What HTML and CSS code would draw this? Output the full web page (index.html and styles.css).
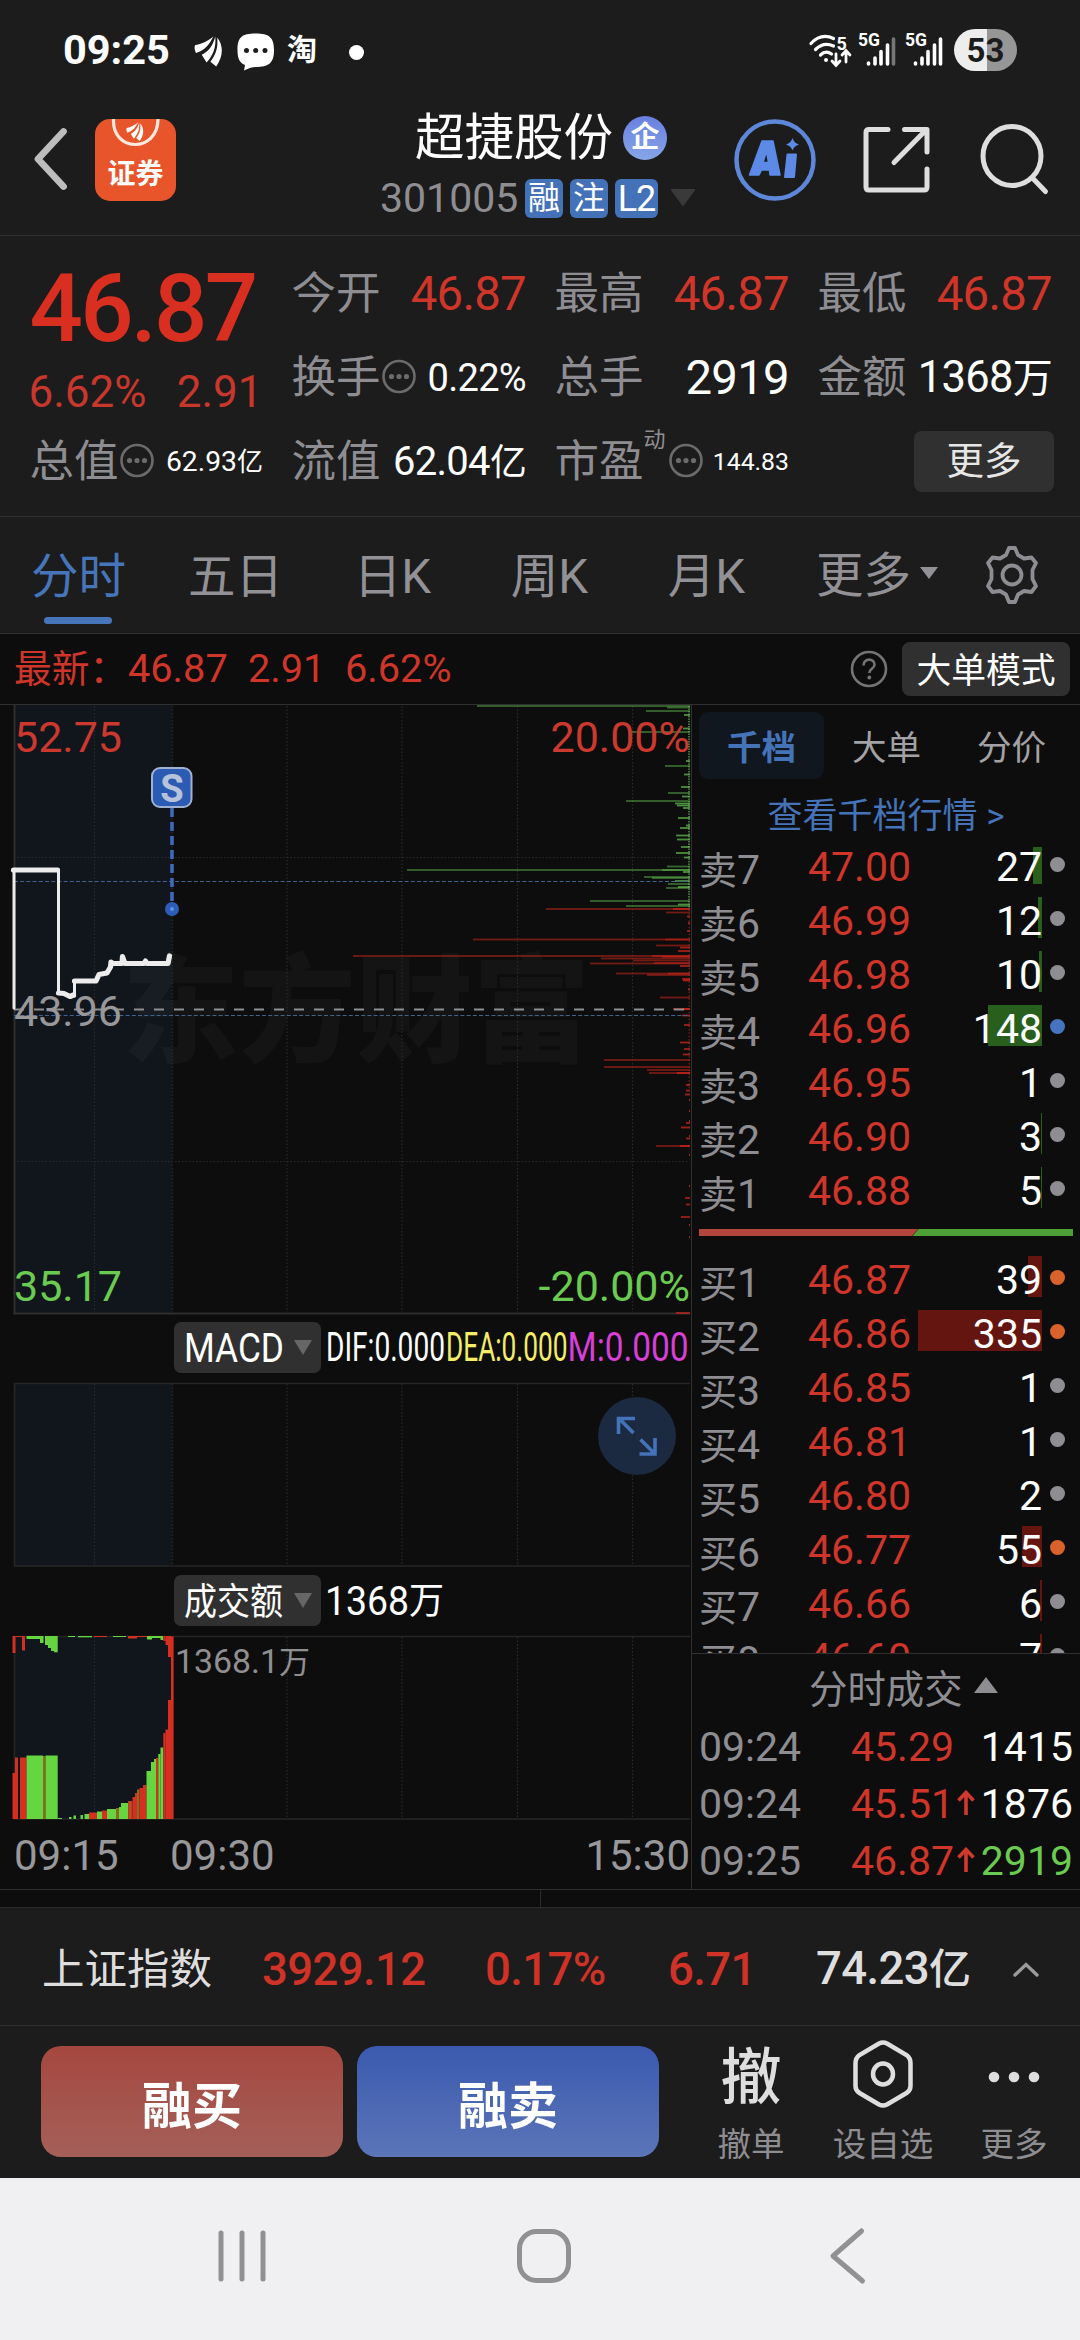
FILE: index.html
```html
<!DOCTYPE html>
<html lang="zh-CN">
<head>
<meta charset="utf-8">
<title>超捷股份 301005</title>
<link rel="stylesheet" href="styles.css">
</head>
<body>
<svg width="0" height="0" class="defs">
  <defs>
    <symbol id="wing" viewBox="0 0 30 32">
      <path d="M1 10C8 9 14 6 20 1C16 9 12 15 2 18C1 15 0 13 1 10Z"/>
      <path d="M22 1C20 9 16 16 8 20L13 28C20 20 23 12 22 1Z"/>
      <path d="M24 2C31 11 30 22 23 32L17 27C23 19 25 12 24 2Z"/>
    </symbol>
    <symbol id="dots" viewBox="0 0 34 34">
      <circle cx="17" cy="17" r="15.5" fill="none" stroke="#6b6b6b" stroke-width="2.6"/>
      <circle cx="9.5" cy="17" r="2.6" fill="#6b6b6b"/><circle cx="17" cy="17" r="2.6" fill="#6b6b6b"/><circle cx="24.5" cy="17" r="2.6" fill="#6b6b6b"/>
    </symbol>
    <symbol id="up" viewBox="0 0 18 26">
      <path d="M9 25V3M1.5 10.5L9 2.5L16.5 10.5" fill="none" stroke="#d2392e" stroke-width="3.6"/>
    </symbol>
  </defs>
</svg>

<div class="screen">
  <header class="top">
    <div class="status">
      <span class="clock">09:25</span>
      <svg class="st-wing" width="30" height="34" fill="#fff"><use href="#wing"/></svg>
      <svg class="st-bubble" width="38" height="38" viewBox="0 0 38 38">
        <path d="M18.500 .5C32 .5 37 4 37 17C37 30 32 34 18.500 34C15.500 34 12 35 7 37.500L8 32C2 29.500 .5 25 .5 17C.5 4 5 .5 18.500 .5Z" fill="#fff"/>
        <circle cx="9.500" cy="17.500" r="2.500" fill="#1c1c1c"/><circle cx="18.700" cy="17.500" r="2.500" fill="#1c1c1c"/><circle cx="28" cy="17.500" r="2.500" fill="#1c1c1c"/>
      </svg>
      <span class="st-tao">淘</span>
      <i class="st-dot"></i>
      <svg class="st-wifi" width="44" height="36" viewBox="0 0 44 36" fill="none" stroke="#fff" stroke-width="3.200" stroke-linecap="round">
        <path d="M2 10.500C9 3 17 2 24.500 5.500M6.500 16.500C12 11 18 10 24.500 13M11.500 22C15 18.500 19 18.500 22.500 21"/>
        <circle cx="17" cy="27" r="2" fill="#fff" stroke="none"/>
        <path d="M27 21V32M23 28L27 32.500L31 28M37 29V18M33 22L37 17.500L41 22" stroke-width="2.800"/>
        <text x="27.500" y="16.500" class="st-5">5</text>
      </svg>
      <svg class="st-sig" width="38" height="36" viewBox="0 0 38 36">
        <text x="0" y="14" textLength="22" lengthAdjust="spacingAndGlyphs" class="st-5g">5G</text>
        <g stroke="#fff" stroke-width="3.600" stroke-linecap="round"><path d="M10.500 32V31M17 32V26M23 32V19.500M29.500 32V13"/><path d="M35.500 32V7" stroke="#777"/></g>
      </svg>
      <svg class="st-sig" width="38" height="36" viewBox="0 0 38 36">
        <text x="0" y="14" textLength="22" lengthAdjust="spacingAndGlyphs" class="st-5g">5G</text>
        <g stroke="#fff" stroke-width="3.600" stroke-linecap="round"><path d="M10.500 32V31M17 32V26M23 32V19.500M29.500 32V13M35.500 32V7"/></g>
      </svg>
      <span class="battery">53</span>
    </div>
    <div class="titlebar">
      <svg class="back" width="34" height="62" viewBox="0 0 34 62"><path d="M30.500 3.500L5 31L30.500 58.500" fill="none" stroke="#bdbdbd" stroke-width="6.800" stroke-linecap="round" stroke-linejoin="round"/></svg>
      <div class="app">
        <svg width="81" height="30" viewBox="0 0 81 30"><path d="M18.500 0C17 34 63 34 63 0" fill="none" stroke="#ffe9df" stroke-width="3.200"/><use href="#wing" x="31" y="3" width="18" height="19" fill="#fff"/></svg>
        <span>证券</span>
      </div>
      <div class="name">
        <div class="name-row"><span class="stock">超捷股份</span><span class="qi">企</span></div>
        <div class="code-row"><span class="code">301005</span><b class="chip">融</b><b class="chip">注</b><b class="chip l2">L2</b>
          <svg width="26" height="18" viewBox="0 0 26 18"><path d="M2 1H24L13 16Z" fill="#3a3a3a" stroke="#3a3a3a" stroke-width="2" stroke-linejoin="round"/></svg></div>
      </div>
      <svg class="ai" width="82" height="84" viewBox="0 0 82 84">
        <circle cx="41" cy="42" r="38.500" fill="none" stroke="#5d87d8" stroke-width="4.500"/>
        <path d="M28 23H39L46 57H36L35.500 52H27.500L25 57H15.500ZM32.500 33L29 44.500H34.500Z" fill="#5c8ae6" fill-rule="evenodd" stroke="#5c8ae6" stroke-width="1.500" stroke-linejoin="round"/>
        <path d="M53.500 36.500H62L60 59H51Z" fill="#5c8ae6" stroke="#5c8ae6" stroke-width="2" stroke-linejoin="round"/>
        <path d="M58.500 20Q60 25 65 26.500Q60 28 58.500 32.500Q57 28 52 26.500Q57 25 58.500 20Z" fill="#5c8ae6"/>
      </svg>
      <svg class="share" width="68" height="68" viewBox="0 0 68 68" fill="none" stroke="#dedede" stroke-width="5" stroke-linecap="round" stroke-linejoin="round"><path d="M25 3.500H6Q3 3.500 3 6.500V61Q3 64 6 64H61Q64 64 64 61V43M41.500 3.500H64V26M31 36.500L62 5"/></svg>
      <svg class="search" width="70" height="72" viewBox="0 0 70 72" fill="none" stroke="#dedede" stroke-width="5" stroke-linecap="round"><ellipse cx="33" cy="33" rx="29" ry="29.500"/><path d="M53.500 55L66.500 68.500"/></svg>
    </div>
  </header>

  <section class="quote">
    <div class="q-price">
      <div class="big">46.87</div>
      <div class="chg"><span>6.62%</span><span>2.91</span></div>
    </div>
    <div class="cell"><span class="lb">今开</span><span class="v red">46.87</span></div>
    <div class="cell"><span class="lb">最高</span><span class="v red">46.87</span></div>
    <div class="cell"><span class="lb">最低</span><span class="v red">46.87</span></div>
    <div class="cell"><span class="lb">换手</span><svg class="tip" width="34" height="35"><use href="#dots"/></svg><span class="v s37">0.22%</span></div>
    <div class="cell"><span class="lb">总手</span><span class="v">2919</span></div>
    <div class="cell"><span class="lb">金额</span><span class="v s43">1368<i>万</i></span></div>
    <div class="cell first"><span class="lb">总值</span><svg class="tip" width="34" height="35"><use href="#dots"/></svg><span class="v s28">62.93<i>亿</i></span></div>
    <div class="cell"><span class="lb">流值</span><span class="v s40">62.04<i>亿</i></span></div>
    <div class="cell"><span class="lb">市盈</span><sup>动</sup><svg class="tip" width="34" height="35"><use href="#dots"/></svg><span class="v s24">144.83</span></div>
    <div class="cell"><button class="more">更多</button></div>
  </section>

  <nav class="periods">
    <span class="on">分时</span><span>五日</span><span>日K</span><span>周K</span><span>月K</span>
    <span class="pm">更多<svg width="18" height="14" viewBox="0 0 18 14"><path d="M0 1H18L9 13Z" fill="#929196"/></svg></span>
    <svg class="gear" width="60" height="60" viewBox="0 0 60 60" fill="none" stroke="#8e8d92" stroke-width="3.800" stroke-linejoin="round"><path d="M24 10L27 3H33L36 10L42 13.500L49.500 12.500L54 18L50.500 25V34L54 41L49.500 47L42 46L36 49.500L33 57H27L24 49.500L18 46L10.500 47L6 41L9.500 34V25L6 18L10.500 12.500L18 13.500Z"/><circle cx="30" cy="30" r="9.500"/></svg>
  </nav>

  <div class="latest">
    <span class="lt-label">最新：</span><span class="lt-a">46.87</span><span class="lt-b">2.91</span><span class="lt-c">6.62%</span>
    <svg class="help" width="38" height="38" viewBox="0 0 38 38"><circle cx="19" cy="19" r="17" fill="none" stroke="#747474" stroke-width="2.600"/><path d="M13.500 15.500C13.500 7.500 25 8 24.500 15C24.300 18.500 19.300 18.500 19.300 23" fill="none" stroke="#747474" stroke-width="2.600"/><circle cx="19.300" cy="27.500" r="1.900" fill="#747474"/></svg>
    <button class="mode">大单模式</button>
  </div>

  <main class="board">
    <section class="charts">
      <svg class="trend" width="691" height="610" viewBox="0 705 691 610">
        <rect x="14" y="705" width="158" height="608" fill="#11161d"/>
        <text x="122" y="1053" class="mark" textLength="468" lengthAdjust="spacingAndGlyphs">东方财富</text>
        <path class="grid" d="M94.500 706V1312M172.500 706V1312M287 706V1312M402 706V1312M517.500 706V1312M632.500 706V1312M14 857.500H690M14 1161.500H690"/>
        <path d="M14.500 705V1313.500H690" fill="none" stroke="#2e2e2e" stroke-width="2"/>
        <g id="depth"></g>
        <path class="blue-dash" d="M14 881.500H690M14 1015.500H690"/>
        <path d="M14 1009.600H688" stroke="#8f8f8f" stroke-width="2" stroke-dasharray="10 10"/>
        <g fill="none" stroke="#ececec" stroke-linejoin="round" stroke-linecap="round">
          <path d="M14 1008V870M58.500 870V993M74.500 996V981" stroke-width="3"/>
          <path d="M13.500 870H57.500M58.500 993L64 993.500L70 996.500L73.500 995M74.500 981H96L99 974.500L107 973L110.500 967L111 962L113 963.500H122L122.500 956.500L125 963.500H144L145.500 961L147 963.500H168L169.500 956" stroke-width="5.200"/>
        </g>
        <path d="M172 808V902" stroke="#3f69bb" stroke-width="3.600" stroke-dasharray="9 5"/>
        <circle cx="172" cy="909" r="7" fill="#2d5db6"/><circle cx="172" cy="909" r="2" fill="#5f93f0"/>
        <rect x="152" y="768" width="39.500" height="39" rx="8" fill="#2c5bb3" stroke="#9fb0d0" stroke-width="2"/>
        <text x="172" y="802" class="s-mark" text-anchor="middle">S</text>
        <g class="ax">
          <text x="14" y="752" class="r">52.75</text><text x="690" y="752" class="r" text-anchor="end">20.00%</text>
          <text x="14" y="1025.500">43.96</text>
          <text x="14" y="1300.500" class="g">35.17</text><text x="690" y="1300.500" class="g" text-anchor="end">-20.00%</text>
        </g>
      </svg>
      <div class="ind">
        <button><svg width="100" height="50"><text x="0" y="39" textLength="100" lengthAdjust="spacingAndGlyphs">MACD</text></svg><svg width="18" height="15" viewBox="0 0 18 15"><path d="M0 0H18L9 15Z" fill="#666"/></svg></button>
        <svg class="vals" width="368" height="51"><text x="4" y="39" textLength="119" lengthAdjust="spacingAndGlyphs">DIF:0.000</text><text x="124" y="39" textLength="121.500" lengthAdjust="spacingAndGlyphs" class="dea">DEA:0.000</text><text x="245.500" y="39" textLength="121" lengthAdjust="spacingAndGlyphs" class="m">M:0.000</text></svg>
      </div>
      <div class="plot">
        <svg width="691" height="185" viewBox="0 1383 691 185">
          <rect x="14" y="1383" width="158" height="183" fill="#11161d"/>
          <path class="grid" d="M94.500 1384V1566M172.500 1384V1566M287 1384V1566M402 1384V1566M517.500 1384V1566M632.500 1384V1566"/>
          <path d="M690 1383.500H14.500V1566H690" fill="none" stroke="#262626" stroke-width="1.600"/>
        </svg>
        <svg class="expand" width="78" height="78" viewBox="0 0 78 78"><circle cx="39" cy="39" r="39" fill="#1b2a40"/><path d="M35.500 36L22 22.500M20.500 37V21.500H37M42.500 42.500L56 56M41.500 57H57V41" fill="none" stroke="#4473b8" stroke-width="3.600"/></svg>
      </div>
      <div class="ind">
        <button><svg width="100" height="50"><text x="0" y="38.500" class="cj" textLength="99" lengthAdjust="spacingAndGlyphs">成交额</text></svg><svg width="18" height="15" viewBox="0 0 18 15"><path d="M0 0H18L9 15Z" fill="#666"/></svg></button>
        <svg class="vals" width="368" height="51"><text x="3" y="39.500" textLength="84" lengthAdjust="spacingAndGlyphs">1368</text><text x="87" y="39" class="cj" textLength="35" lengthAdjust="spacingAndGlyphs">万</text></svg>
      </div>
      <svg class="volume" width="691" height="185" viewBox="0 1636 691 185">
        <rect x="14" y="1636" width="158" height="183" fill="#11161d"/>
        <path class="grid" d="M94.500 1637V1819M287 1637V1819M402 1637V1819M517.500 1637V1819M632.500 1637V1819"/>
        <path d="M690 1636.500H14.500V1819H690" fill="none" stroke="#262626" stroke-width="1.600"/>
        <g id="vol"></g>
        <text x="175" y="1672.500" class="vmax" textLength="104" lengthAdjust="spacingAndGlyphs">1368.1</text><text x="279" y="1672.500" class="vmax w">万</text>
      </svg>
      <div class="times"><span>09:15</span><span>09:30</span><span>15:30</span></div>
    </section>

    <aside class="book">
      <div class="btabs"><b>千档</b><span>大单</span><span>分价</span></div>
      <div class="link">查看千档行情 <i>&gt;</i></div>
      <div class="sell">
        <div class="lv"><span class="n"><i>卖</i>7</span><span class="p">47.00</span><span class="q"><u style="width:9px"></u>27</span><em></em></div>
        <div class="lv"><span class="n"><i>卖</i>6</span><span class="p">46.99</span><span class="q"><u style="width:4px"></u>12</span><em></em></div>
        <div class="lv"><span class="n"><i>卖</i>5</span><span class="p">46.98</span><span class="q"><u style="width:3px"></u>10</span><em></em></div>
        <div class="lv"><span class="n"><i>卖</i>4</span><span class="p">46.96</span><span class="q"><u style="width:54px"></u>148</span><em class="bl"></em></div>
        <div class="lv"><span class="n"><i>卖</i>3</span><span class="p">46.95</span><span class="q">1</span><em></em></div>
        <div class="lv"><span class="n"><i>卖</i>2</span><span class="p">46.90</span><span class="q"><u style="width:1px"></u>3</span><em></em></div>
        <div class="lv"><span class="n"><i>卖</i>1</span><span class="p">46.88</span><span class="q"><u style="width:1px"></u>5</span><em></em></div>
      </div>
      <svg class="ratio" width="374" height="7" viewBox="0 0 374 7"><path d="M0 0H219L213 7H0Z" fill="#b4453c"/><path d="M219.500 0H374V7H213.500Z" fill="#4f9f37"/></svg>
      <div class="buy">
        <div class="lv"><span class="n"><i>买</i>1</span><span class="p">46.87</span><span class="q"><u style="width:14px"></u>39</span><em class="or"></em></div>
        <div class="lv"><span class="n"><i>买</i>2</span><span class="p">46.86</span><span class="q"><u style="width:124px"></u>335</span><em class="or"></em></div>
        <div class="lv"><span class="n"><i>买</i>3</span><span class="p">46.85</span><span class="q">1</span><em></em></div>
        <div class="lv"><span class="n"><i>买</i>4</span><span class="p">46.81</span><span class="q">1</span><em></em></div>
        <div class="lv"><span class="n"><i>买</i>5</span><span class="p">46.80</span><span class="q">2</span><em></em></div>
        <div class="lv"><span class="n"><i>买</i>6</span><span class="p">46.77</span><span class="q"><u style="width:20px"></u>55</span><em class="or"></em></div>
        <div class="lv"><span class="n"><i>买</i>7</span><span class="p">46.66</span><span class="q"><u style="width:2px"></u>6</span><em></em></div>
        <div class="lv"><span class="n"><i>买</i>8</span><span class="p">46.60</span><span class="q"><u style="width:2px"></u>7</span><em></em></div>
      </div>
      <div class="deals-head">分时成交<svg width="24" height="16" viewBox="0 0 24 16"><path d="M12 0L24 16H0Z" fill="#8e8d92"/></svg></div>
      <div class="deals">
        <div><span class="t">09:24</span><span class="dp">45.29</span><svg width="18" height="26"></svg><span class="dq">1415</span></div>
        <div><span class="t">09:24</span><span class="dp">45.51</span><svg width="18" height="26"><use href="#up"/></svg><span class="dq">1876</span></div>
        <div><span class="t">09:25</span><span class="dp">46.87</span><svg width="18" height="26"><use href="#up"/></svg><span class="dq gr">2919</span></div>
      </div>
    </aside>
  </main>

  <div class="strip"><span></span><span></span></div>

  <section class="index">
    <span class="ix-name">上证指数</span><b class="ix-a">3929.12</b><b class="ix-b">0.17%</b><b class="ix-c">6.71</b><b class="ix-d">74.23<i>亿</i></b>
    <svg width="26" height="15" viewBox="0 0 26 15"><path d="M2 13L13 2.500L24 13" fill="none" stroke="#9a9a9a" stroke-width="3.400" stroke-linecap="round"/></svg>
  </section>

  <footer class="actions">
    <button class="act red-b">融买</button><button class="act blue-b">融卖</button>
    <div class="tool t1"><span class="che">撤</span><small>撤单</small></div>
    <div class="tool t2"><svg width="62" height="68" viewBox="0 0 62 68" fill="none" stroke="#dedede" stroke-width="4.500"><path d="M27 3.500Q31 1.500 35 3.500L54.500 15Q58.500 18 58.500 23V46Q58.500 50.500 54.500 53L35 64.500Q31 66.500 27 64.500L7.500 53Q3.500 50.500 3.500 46V23Q3.500 18 7.500 15Z"/><ellipse cx="31" cy="34" rx="10" ry="10.500"/></svg><small>设自选</small></div>
    <div class="tool t3"><svg width="62" height="68" viewBox="0 0 62 68" fill="#dedede"><circle cx="11" cy="37" r="5.300"/><circle cx="31" cy="37" r="5.300"/><circle cx="51" cy="37" r="5.300"/></svg><small>更多</small></div>
  </footer>

  <div class="sysnav">
    <svg width="50" height="56" viewBox="0 0 50 56" stroke="#919191" stroke-width="5" stroke-linecap="round"><path d="M4 5V51M25 5V51M46 5V51"/></svg>
    <svg width="56" height="56" viewBox="0 0 56 56" fill="none" stroke="#919191" stroke-width="5"><rect x="3.500" y="3.500" width="49" height="49" rx="17"/></svg>
    <svg width="36" height="56" viewBox="0 0 36 56" fill="none" stroke="#919191" stroke-width="5" stroke-linecap="round" stroke-linejoin="round"><path d="M32.500 3L4 28L33.500 53"/></svg>
  </div>
</div>
<script src="charts.js"></script>
</body>
</html>
```
FILE: styles.css
```css
* { box-sizing: border-box; margin: 0; padding: 0; }
i, em, u { font-style: normal; text-decoration: none; }
body { background: #0d0d0d; font-family: Roboto, "Noto Sans CJK SC", sans-serif; color: #fff; }
button { border: 0; font: inherit; color: inherit; display: flex; align-items: center; justify-content: center; }
svg { display: block; flex: none; overflow: visible; }
.defs { position: absolute; }
.screen { width: 1080px; height: 2340px; overflow: hidden; display: flex; flex-direction: column; }
.screen > * { flex: none; }
.red { color: #cf3529; }

.top { height: 236px; background: #1c1c1c; border-bottom: 1px solid #303030; }
.status { height: 100px; display: flex; align-items: center; padding-left: 63px; }
.clock { width: 131px; font: 700 41.500px/50px Roboto, sans-serif; }
.st-wing { width: 29px; margin-right: 14px; margin-top: 2px; }
.st-bubble { margin-right: 12px; margin-top: 4px; }
.st-tao { width: 32px; font-weight: 700; font-size: 30px; line-height: 40px; }
.st-dot { width: 15px; height: 15px; border-radius: 50%; background: #fff; margin: 4px 0 0 30px; }
.st-wifi { margin-left: 445px; margin-top: 2px; }
.st-5 { font: 700 18px Roboto, sans-serif; fill: #fff; stroke: none; }
.st-5g { font: 700 19px Roboto, sans-serif; fill: #fff; }
.st-sig { margin-left: 5px; margin-right: 4px; }
.battery { width: 63px; height: 42px; margin-left: 7px; border-radius: 21px; background: linear-gradient(90deg, #ededed 33px, #969696 33px); color: #1c1c1c; font: 700 33px/43px Roboto, sans-serif; text-align: center; }
.titlebar { height: 135px; display: flex; }
.back { margin: 28px 0 0 33px; }
.app { width: 81px; height: 82px; margin: 19px 0 0 28px; background: #e9552b; border-radius: 15px; display: flex; flex-direction: column; align-items: center; overflow: hidden; }
.app span { font-family: "Noto Sans CJK SC", sans-serif; font-weight: 700; font-size: 28px; line-height: 46px; }
.name { width: 321px; margin-left: 204px; padding-top: 8px; }
.name-row { display: flex; align-items: center; padding-left: 35px; height: 60px; }
.stock { font-size: 49.500px; line-height: 60px; width: 208px; }
.qi { width: 44px; height: 44px; border-radius: 50%; background: linear-gradient(#6a7fe1, #86a6e6); font-weight: 700; font-size: 29px; line-height: 42px; text-align: center; }
.code-row { display: flex; align-items: center; height: 60px; gap: 7px; }
.code { font-size: 41px; line-height: 60px; color: #8e8d92; width: 138px; }
.chip { width: 38px; height: 39px; border-radius: 6px; background: #4472b8; font-weight: 400; font-size: 32px; line-height: 39px; text-align: center; }
.chip.l2 { width: 43px; font-size: 36px; line-height: 40px; letter-spacing: -1px; }
.code-row svg { margin-left: 5px; }
.ai { margin: 18px 0 0 33px; }
.share { margin: 26px 0 0 47px; }
.search { margin: 23px 0 0 48px; }

.quote { height: 281px; background: #1c1c1c; border-bottom: 1px solid #303030; display: grid; grid-template-columns: 233px 234px 234px 234px; grid-template-rows: 84px 84px 84px; column-gap: 29px; padding: 16px 0 0 29.500px; }
.q-price { grid-row: span 2; }
.big { font-weight: 500; font-size: 94px; letter-spacing: -2.800px; line-height: 90px; color: #d92f21; margin-top: 12px; }
.chg { display: flex; justify-content: space-between; font-size: 44px; line-height: 52px; color: #c8372c; margin-top: 12px; margin-left: -1px; }
.cell { display: flex; align-items: center; line-height: 60px; padding-bottom: 0; }
.lb { font-size: 44.500px; color: #8e8d92; white-space: nowrap; }
.tip { margin: -4px 0 0 1px; }
.v { margin-left: auto; font-size: 47.300px; white-space: nowrap; letter-spacing: -.7px; margin-right: -.5px; }
.v i { font-size: .92em; }
.s43 { font-size: 43.500px; } .s40 { font-size: 40px; } .s37 { font-size: 38px; } .s28 { font-size: 28.300px; letter-spacing: 0; } .s24 { font-size: 24.800px; letter-spacing: 0; }
.cell sup { font-size: 22px; line-height: 22px; color: #8e8d92; align-self: flex-start; margin-top: 9px; width: 24px; }
.cell sup + .tip { margin-left: 1px; }
.more { width: 140px; height: 61px; background: #303030; border-radius: 8px; margin-left: auto; margin-right: -2.500px; margin-top: -2px; font-size: 37.500px; color: #e6e6e6; }

.periods { height: 117px; background: #1c1c1c; border-bottom: 1px solid #303030; display: flex; font-size: 47.500px; line-height: 116px; color: #929196; }
.periods span { width: 157px; text-align: center; margin-top: 2px; height: 114px; }
.periods .on { color: #4675ba; position: relative; }
.periods .on::after { content: ""; position: absolute; left: 44px; top: 98px; width: 68px; height: 7px; border-radius: 4px; background: #4675ba; }
.periods .pm { width: 170px; display: flex; align-items: center; padding-left: 31px; }
.pm svg { margin-left: 9px; margin-top: -6px; }
.gear { margin: 28px 0 0 27px; }

.latest { height: 71px; border-bottom: 1px solid #303030; display: flex; align-items: center; padding-left: 14px; font-size: 39.700px; line-height: 70px; color: #cf3529; white-space: nowrap; }
.lt-label { font-size: 37.800px; width: 114px; }
.lt-a { width: 120px; } .lt-b { width: 97px; } .lt-c { width: 110px; }
.help { margin-left: 395px; }
.mode { width: 168px; height: 54px; border-radius: 8px; background: #303030; color: #fff; font-size: 34.800px; line-height: 54px; margin-left: 14px; padding-top: 4px; }

.board { height: 1185px; display: flex; border-bottom: 1px solid #303030; }
.charts { width: 691px; }
.grid { stroke: #2a2a2a; stroke-width: 1.200; stroke-dasharray: 1.500 2; fill: none; }
.blue-dash { stroke: #41648f; stroke-width: 1.200; stroke-dasharray: 4 2.200; fill: none; }
.mark { font: 900 117px "Noto Sans CJK SC", sans-serif; fill: #fff; fill-opacity: .032; }
.s-mark { font: 700 38px Roboto, sans-serif; fill: #b7c3da; }
.ax text { font-size: 43px; fill: #98989b; }
.ax .r { fill: #cb392e; } .ax .g { fill: #6bcb51; }
.ind { height: 68px; display: flex; padding: 7px 0 0 174px; }
.ind button { width: 147px; height: 51px; border-radius: 7px; background: #303030; justify-content: flex-start; padding-left: 10px; gap: 10px; }
.ind text { font-size: 40px; fill: #fff; }
.ind .cj { font-size: 37px; }
.ind .dea { fill: #f5ec68; } .ind .m { fill: #d83fd8; }
.vals { margin-left: 1px; }
.plot { position: relative; }
.expand { position: absolute; left: 598px; top: 14px; }
.vmax { font-size: 33px; fill: #8f8f91; }
.vmax.w { font-size: 31px; }
.times { display: flex; font-size: 42px; line-height: 68px; color: #98989b; padding: 1px 1px 0 14px; }
.times span:nth-child(1) { width: 156px; }
.times span:nth-child(3) { margin-left: auto; }

.book { flex: 1; border-left: 1.500px solid #303030; height: 1184px; display: flex; flex-direction: column; }
.book > * { flex: none; }
.btabs { display: flex; margin: 7px 0 0 7px; font-size: 34.500px; line-height: 73px; text-align: center; color: #a2a2a4; }
.btabs > * { width: 125px; height: 67px; }
.btabs b { color: #4473b8; background: #10171f; border-radius: 9px; }
.link { height: 68px; padding-left: 75.500px; font-size: 35px; line-height: 76px; color: #4473b8; white-space: pre; }
.sell { height: 378px; overflow: hidden; padding-top: 0; }
.lv { height: 54px; display: flex; font-size: 41px; line-height: 48px; }
.sell .lv:first-child { margin-top: -4px; }
.n { width: 110px; padding-left: 7px; color: #8e8d92; padding-top: 3px; }
.n i { font-size: 38px; }
.p { width: 101px; padding-left: 6px; color: #cf3529; }
.q { width: 139px; height: 41px; text-align: right; position: relative; z-index: 0; }
.q u { position: absolute; right: 0; top: 0; height: 41px; background: #295f1c; z-index: -1; }
.buy .q u { background: #641510; }
.lv em { width: 15px; height: 15px; border-radius: 50%; background: #8e8d92; margin: 13.500px 0 0 7.500px; }
.lv em.bl { background: #4573bd; } .lv em.or { background: #d9622b; }
.ratio { margin: 4px 0 0 7px; }
.buy { height: 418px; overflow: hidden; border-bottom: 1px solid #303030; padding-top: 20px; }
.deals-head { height: 65px; display: flex; align-items: center; padding: 0 0 2px 117px; font-size: 38.400px; color: #8e8d92; }
.deals-head svg { margin: -2px 0 0 11px; }
.deals div { height: 57px; display: flex; align-items: center; font-size: 41px; line-height: 57px; }
.t { width: 150px; padding-left: 7px; color: #8e8d92; }
.dp { width: 109px; padding-left: 9px; color: #cf3529; }
.deals svg { margin: -3px 0 0 6px; }
.dq { margin-left: auto; padding-right: 7px; }
.gr { color: #6bcb51; }

.strip { height: 18px; display: flex; border-bottom: 1px solid #2a2a2a; }
.strip span { width: 540px; }
.strip span + span { border-left: 1px solid #2a2a2a; }

.index { height: 118px; background: #1c1c1c; border-bottom: 1px solid #2e2e2e; display: flex; align-items: center; padding: 6px 0 0 42px; font-size: 45.500px; line-height: 60px; }
.index b { font-weight: 500; letter-spacing: -.6px; color: #cf3226; }
.ix-name { width: 220px; font-size: 42.500px; color: #dedede; }
.ix-a { width: 223px; } .ix-b { width: 183px; } .ix-c { width: 148px; }
.index .ix-d { width: 197px; color: #dedede; }
.ix-d i { font-size: 42px; }

.actions { height: 152px; background: #1c1c1c; display: flex; padding: 20px 0 0 41px; }
.act { width: 302px; height: 111px; border-radius: 20px; font-weight: 700; font-size: 50px; padding-top: 1px; margin-right: 14px; }
.red-b { background: linear-gradient(#a5473f, #a46059); }
.blue-b { background: linear-gradient(#3b5aaf, #5b75b8); }
.tool { display: flex; flex-direction: column; align-items: center; width: 130px; margin-top: -6px; color: #dedede; }
.tool small { font-size: 33.500px; line-height: 40px; margin-top: 17px; color: #8e8d92; white-space: nowrap; }
.che { font-weight: 500; font-size: 61px; line-height: 76px; height: 68px; }
.t1 { margin-left: 13px; } .t2 { margin-left: 2px; } .t3 { margin-left: 1px; }

.sysnav { height: 162px; background: #f0f0f2; display: flex; padding: 50px 0 0 217px; }
.sysnav svg:nth-child(2) { margin-left: 249px; }
.sysnav svg:nth-child(3) { margin-left: 257px; }
```
FILE: charts.js
```javascript
const NS = "http://www.w3.org/2000/svg";
function add(parent, name, attrs) {
  const el = document.createElementNS(NS, name);
  for (const k in attrs) el.setAttribute(k, attrs[k]);
  parent.appendChild(el);
}

// Order depth: [y, length leftwards from the right edge]
const asks = [[706,213],[707.5,23],[711,44],[715,6],[732,58],[728.5,7],[761,4],[766,25],[774.500,6],[787,9],[793,22],[796.500,8],[801,64],[803.500,15],[805.500,13],[808,7],[818,12],[825.500,4],[828,10],[835.500,14],[839.500,13],[847,9],[853,14],[857.500,6],[866.500,23],[870,283],[870,28],[872,7],[877,46],[878,38],[881,15],[884,22],[887,12],[888,24],[901,100],[904.500,12],[906,64]];
const bids = [[909,144],[909,17],[912.500,24],[916.500,3],[923,2],[931,3],[939.500,217],[939.500,25],[945.500,34],[947.500,10],[951,12],[956,337],[956,38],[957,28],[958.500,89],[960.500,57],[963.500,100],[963,36],[966,10],[973.500,74],[973.500,22],[975,43],[979,8],[980.500,7],[989.500,2],[997.500,30],[1009,17],[1009,8],[1015.500,8],[1025,6],[1042.500,10],[1049,6],[1054.500,7],[1060,86],[1067,86],[1070,43],[1073,41],[1073,13],[1085,4],[1090.500,4],[1094.500,5],[1123,4],[1127.500,9],[1138.500,4],[1146,34],[1146,10],[1198,5],[1204.500,4],[1217,9],[1313,14]];
const depth = document.getElementById("depth");
const row = (list, color) => list.forEach(([y, w]) =>
  add(depth, "rect", { x: 690 - w, y: y - 0.9, width: w, height: 1.8, fill: color, "fill-opacity": w > 20 ? 0.5 : 0.72 }));
row(asks, "#62bf50");
row(bids, "#d8281c");
for (let y = 706; y < 908; y += 2.5) add(depth, "rect", { x: 688, y, width: 2, height: 1.4, fill: "#62bf50", "fill-opacity": 0.6 });
for (let y = 910; y < 1090; y += 3.4) add(depth, "rect", { x: 688.5, y, width: 1.5, height: 1.4, fill: "#d8281c", "fill-opacity": 0.5 });
[1099,1110,1120,1135,1154,1185,1224,1236].forEach(y => add(depth, "rect", { x: 689, y, width: 1, height: 2, fill: "#a3231a" }));

// Volume bars: [x0, x1, y0, y1, colour]
const R = "#d42f20", G = "#65d63f", B = "#8c6a1e";
const bars = [
  [12.5,15,1773,1819,R],[15,18,1757.5,1819,R],[20,26.5,1757.5,1819,R],[26.5,43,1755.5,1819,G],[43,45.5,1756,1819,B],[45.5,57.7,1755.5,1819,G],
  [58,62,1818,1819,G],[69,71.5,1817,1819,G],[73.5,76,1815.5,1819,G],[80.5,83,1815,1819,G],[84.5,89,1814,1819,G],[89,97,1812.5,1819,R],
  [97,102,1811.5,1819,G],[102,107,1810.5,1819,R],[107,116,1809,1819,G],[116,119,1808,1819,B],[119,121,1807,1819,G],[121,128,1803,1819,G],
  [128,132.5,1801,1819,R],[129.5,131,1801,1819,B],[132.5,135,1797,1819,R],[135,137,1793,1819,R],[137,139.5,1789.5,1819,B],[139.5,143,1788,1819,R],
  [143,146.5,1785,1819,R],[146.5,151,1771,1819,G],[151,154,1762,1819,G],[154,156,1759,1819,G],[156,158.3,1758,1819,R],[158.3,160.5,1754,1819,G],
  [160.5,163.3,1747.5,1819,G],[163.3,165.5,1733,1819,R],[165.5,168,1729.5,1819,R],[168,171,1700,1819,R],[171,173.6,1636.5,1819,R],
  [12.5,15.5,1636,1653,R],[15.5,22,1636,1637,R],[22,25,1636,1650.5,R],[26.5,40,1636,1639,G],[40,43.5,1636,1643,G],[45,48,1636,1645,G],
  [48,51,1636,1648,G],[51,54,1636,1651,G],[54,57.7,1636,1652.3,G],[68,75,1636,1637,G],[78,92,1636,1637.3,G],[94,107,1636,1637,R],[113,126,1636,1637,G],
  [128,137,1636,1638.500,R],[137,147,1636,1637,R],[147,152,1636,1639.500,G],[152,163,1636,1638,G],[160.5,163.3,1638,1640,G],[163.3,165.5,1636,1641,R],[165.5,168,1636,1645,R],[168,171,1636,1657,R]
];
const vol = document.getElementById("vol");
bars.forEach(([a, b, t, e, c]) => add(vol, "rect", { x: a, y: t, width: b - a, height: e - t, fill: c }));
```
